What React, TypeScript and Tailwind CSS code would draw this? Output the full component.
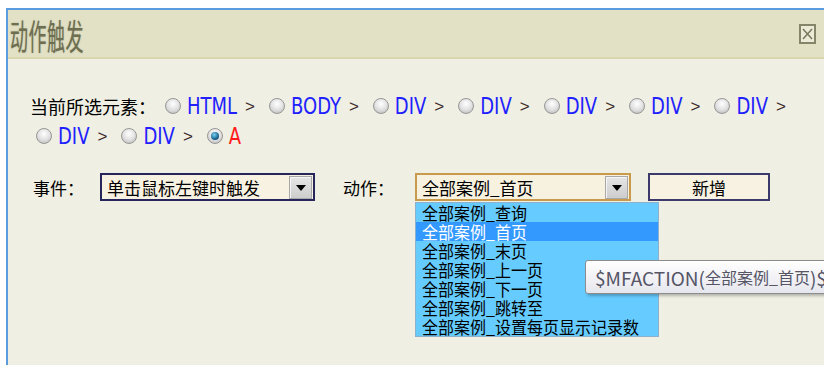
const path = [
  { label: 'HTML' },
  { label: 'BODY' },
  { label: 'DIV' },
  { label: 'DIV' },
  { label: 'DIV' },
  { label: 'DIV' },
  { label: 'DIV' },
]

const path2 = [{ label: 'DIV' }, { label: 'DIV' }]

const actions = [
  '全部案例_查询',
  '全部案例_首页',
  '全部案例_末页',
  '全部案例_上一页',
  '全部案例_下一页',
  '全部案例_跳转至',
  '全部案例_设置每页显示记录数',
]

function Radio({ checked }: { checked?: boolean }) {
  return (
    <span className="flex h-4 w-4 shrink-0 items-center justify-center rounded-full border border-[#979797] bg-[radial-gradient(circle_at_50%_35%,#ffffff_0%,#e2e2e2_50%,#b4b4b4_100%)]">
      {checked && (
        <span className="h-[8px] w-[8px] rounded-full bg-[radial-gradient(circle_at_40%_35%,#7fd0f0_0%,#1d6f9a_55%,#0a3048_100%)]" />
      )}
    </span>
  )
}

function PathItem({ label, red, last }: { label: string; red?: boolean; last?: boolean }) {
  return (
    <span className="mr-[14px] flex shrink-0 items-center">
      <Radio checked={red} />
      <span
        className={
          red
            ? "ml-[6px] inline-block scale-y-[1.15] font-['DejaVu_Sans_Condensed','Liberation_Sans',sans-serif] text-[20px] leading-none text-[#ff1a1a]"
            : "ml-[6px] inline-block scale-y-[1.15] font-['DejaVu_Sans_Condensed','Liberation_Sans',sans-serif] text-[20px] leading-none text-[#2121ff]"
        }
      >
        {label}
      </span>
      {!last && (
        <span className="ml-[8px] font-['Liberation_Sans',sans-serif] text-[17px] leading-none text-[#3a2a2a]">&gt;</span>
      )}
    </span>
  )
}

function Arrow() {
  return (
    <span className="flex h-[23px] w-[23px] items-center justify-center border border-[#a8a8a8] bg-[linear-gradient(#e6e6e6,#cdcdcd)] shadow-[inset_1px_1px_0_#f4f4f4]">
      <svg width="10" height="6" viewBox="0 0 10 6" className="mt-[2px]">
        <path d="M0 0H10L5 6Z" fill="#000" />
      </svg>
    </span>
  )
}

export default function App() {
  return (
    <div className="h-[365px] w-[824px] overflow-hidden bg-white pt-[8px] pl-[6px] font-['Noto_Sans_CJK_SC','Noto_Sans',sans-serif]">
      <div className="h-[400px] w-[830px] border-t-2 border-l-2 border-[#5b9be0] bg-[#efefe3]">
        <header className="flex h-[49px] items-center justify-between border-b-2 border-[#d9d6ad] bg-[#e2e1c6] pl-[2px] pr-[20px]">
          <span className="inline-block origin-center scale-y-[1.95] text-[18px] leading-none tracking-[0.5px] text-[#6e6e50] [text-shadow:0_0_1px_#a8a88c]">
            动作触发
          </span>
          <span className="flex h-[20px] w-[17px] items-center justify-center border-2 border-[#85856a] bg-[#ecebd8]">
            <svg width="11" height="12" viewBox="0 0 11 12">
              <path d="M1 1L10 11M10 1L1 11" stroke="#7a7a60" strokeWidth="1.6" />
            </svg>
          </span>
        </header>

        <div className="pt-[32px] pl-[22px]">
          <div className="flex h-[30px] items-center">
            <span className="mr-[9px] shrink-0 whitespace-nowrap text-[18px] leading-none text-black">当前所选元素：</span>
            {path.map((p, i) => (
              <PathItem key={i} label={p.label} />
            ))}
          </div>
          <div className="ml-[6px] flex h-[30px] items-center">
            {path2.map((p, i) => (
              <PathItem key={i} label={p.label} />
            ))}
            <PathItem label="A" red last />
          </div>

          <div className="mt-[22px] ml-[3px] flex items-center text-[17px] leading-none text-black">
            <span>事件：</span>
            <div className="ml-[16px] flex h-[28px] w-[215px] items-center justify-between border-2 border-[#26265c] bg-[#f7f2e2] pr-[1px] pl-[5px]">
              <span>单击鼠标左键时触发</span>
              <Arrow />
            </div>

            <span className="ml-[28px]">动作：</span>
            <div className="relative ml-[21px]">
              <div className="flex h-[28px] w-[216px] items-center justify-between border-2 border-[#c99a4c] bg-[#f7f1e0] pr-[1px] pl-[5px]">
                <span>全部案例_首页</span>
                <Arrow />
              </div>
              <ul className="absolute top-[29px] left-0 w-[244px] border border-[#8fb0cc] bg-[#66ccff] text-[16px]">
                {actions.map((a, i) => (
                  <li
                    key={a}
                    className={
                      i === 1
                        ? 'h-[19px] bg-[#3399ff] pl-[6px] leading-[19px] whitespace-nowrap text-white'
                        : 'h-[19px] pl-[6px] leading-[19px] whitespace-nowrap text-black'
                    }
                  >
                    <span className="inline-block scale-y-[1.1]">{a}</span>
                  </li>
                ))}
              </ul>
              <div className="absolute top-[87px] left-[170px] flex h-[34px] items-center rounded-[3px] border border-[#8c8c8c] bg-[linear-gradient(#ffffff,#e6e6ee)] pr-[10px] pl-[9px] text-[19px] whitespace-nowrap text-[#555566] shadow-[2px_2px_3px_rgba(0,0,0,0.25)]">
                <span>$MFACTION(</span>
                <span className="text-[16px]">全部案例_首页</span>
                <span>)$</span>
              </div>
            </div>

            <button className="ml-[17px] flex h-[28px] w-[122px] items-center justify-center border-2 border-[#3b3a6a] bg-[#f7f2e2] text-[17px] text-black">
              新增
            </button>
          </div>
        </div>
      </div>
    </div>
  )
}
